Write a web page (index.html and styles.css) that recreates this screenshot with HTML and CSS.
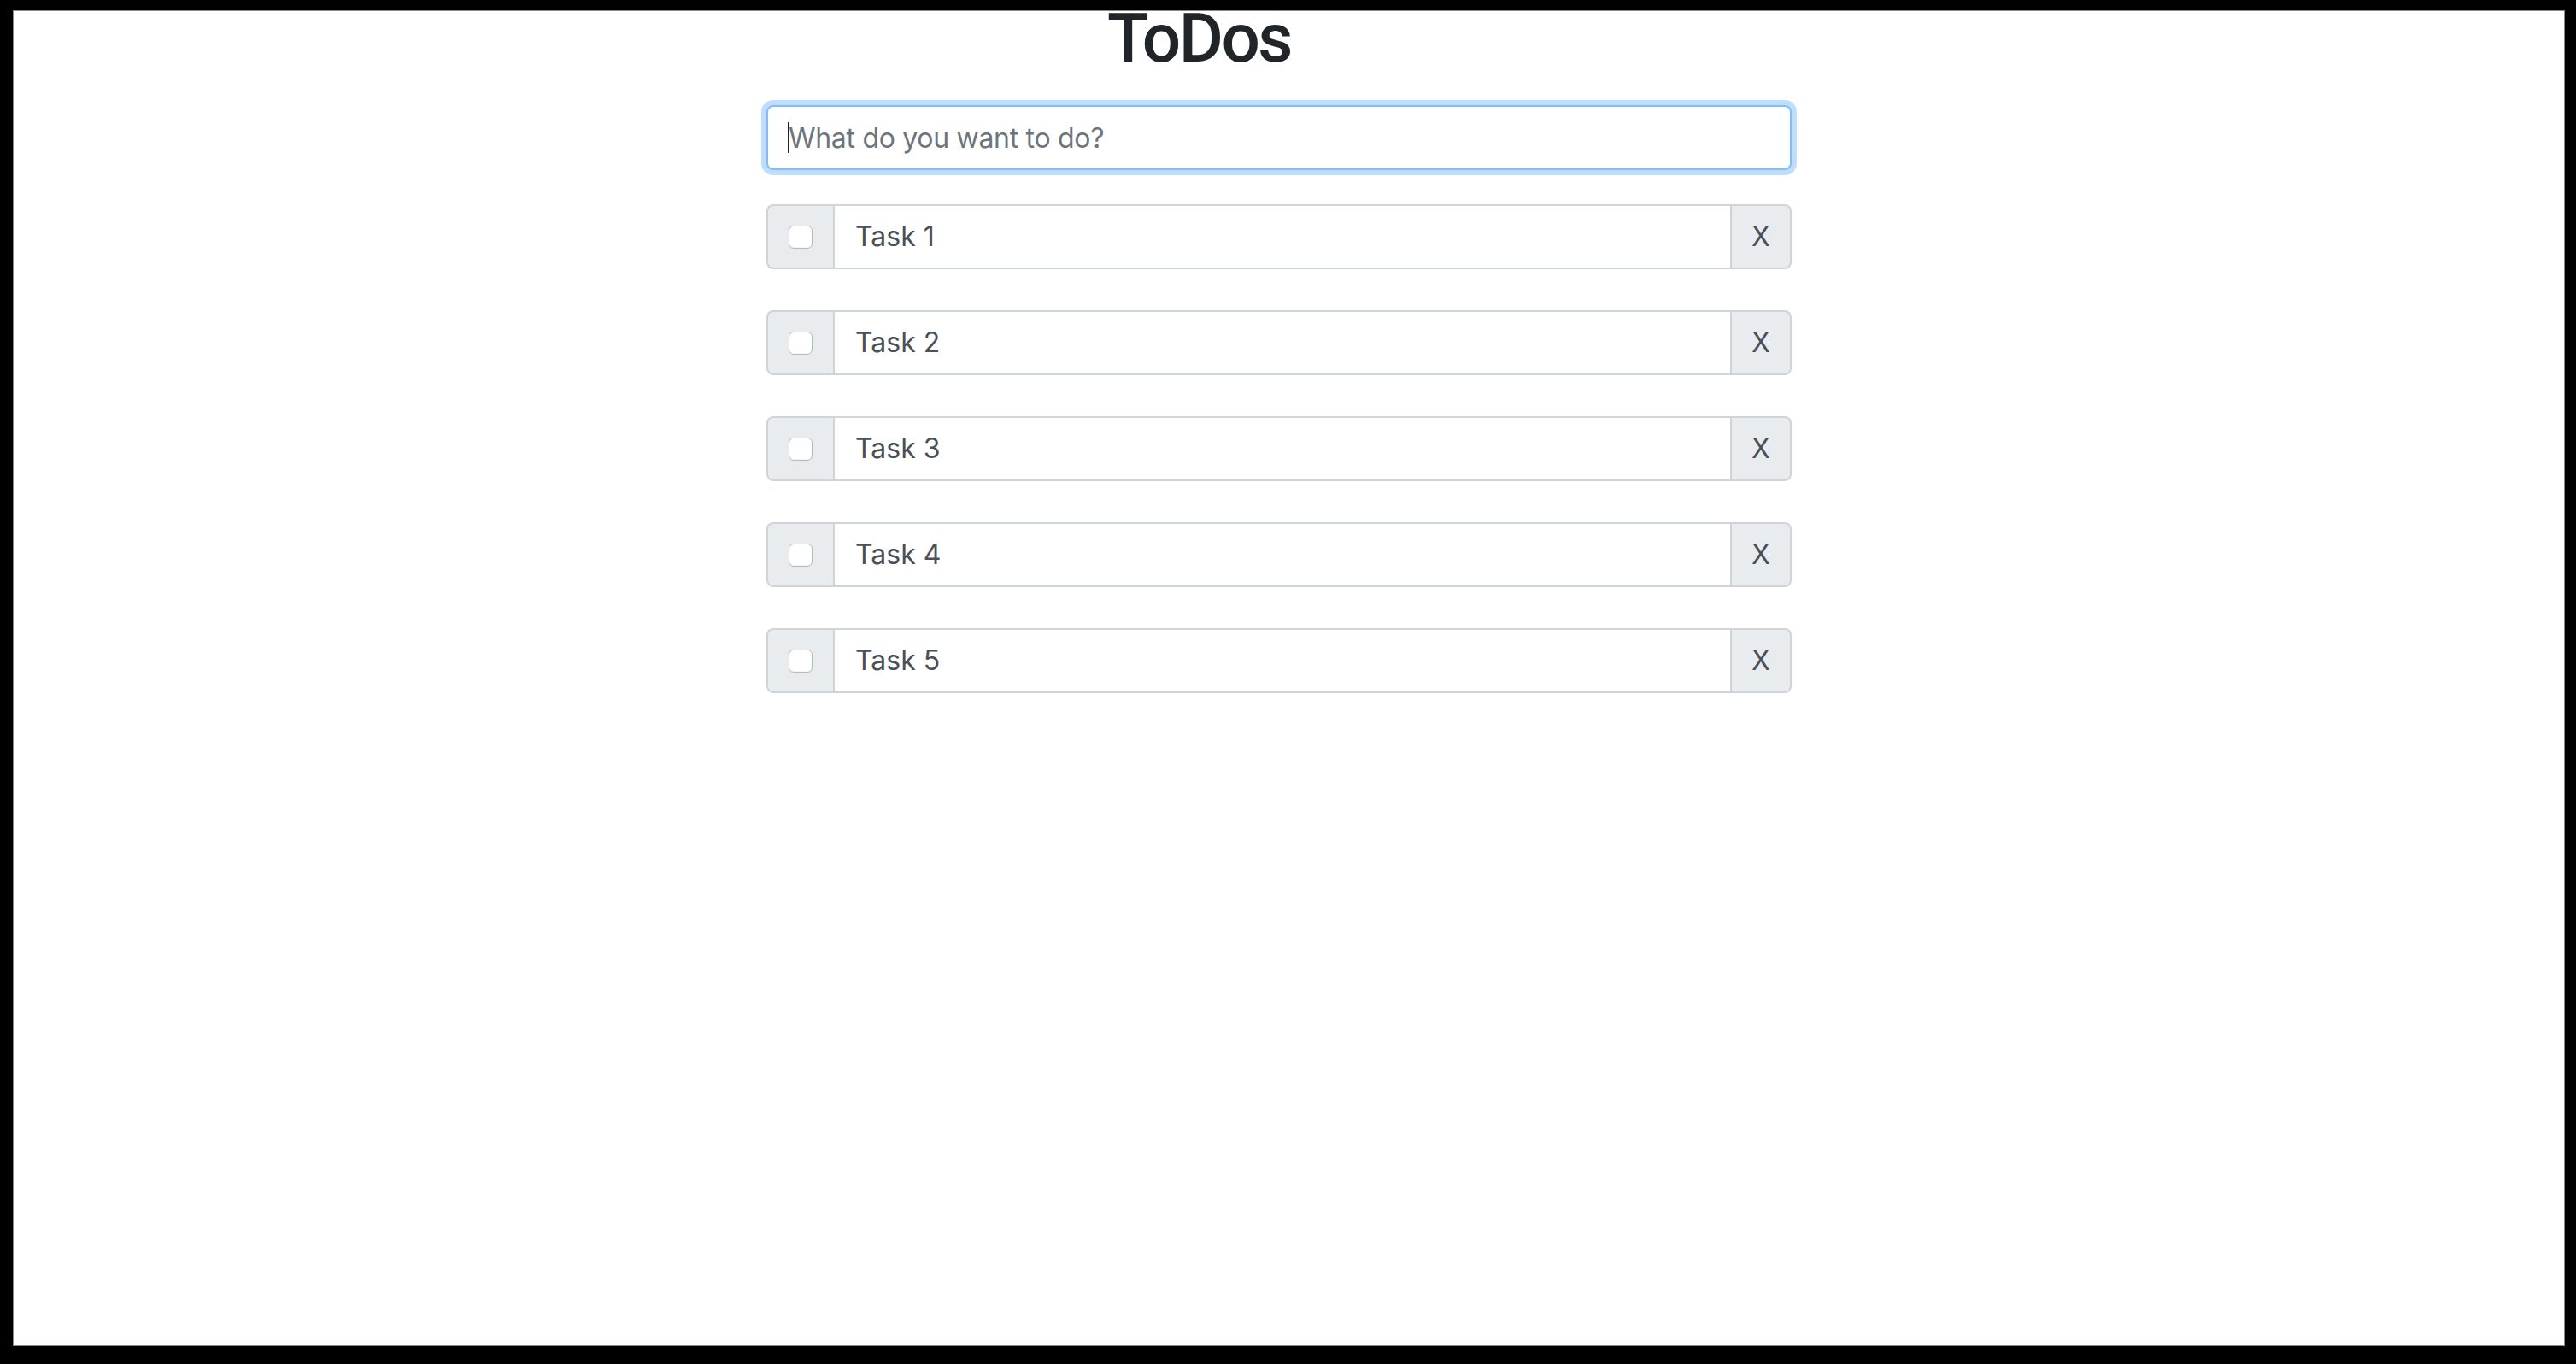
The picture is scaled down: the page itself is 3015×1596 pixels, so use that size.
FILE: index.html
```html
<!DOCTYPE html>
<html lang="en">
<head>
<meta charset="utf-8">
<title>ToDos</title>
<link rel="stylesheet" href="styles.css">
</head>
<body>
<div class="screen">
  <div class="app">
    <h1 class="title">ToDos</h1>
    <div class="new-todo">
      <input class="new-todo-input" type="text" placeholder="What do you want to do?">
      <span class="caret"></span>
    </div>
    <div class="todo-list">
      <div class="todo-row">
        <div class="check-cell"><span class="checkbox"></span></div>
        <div class="todo-text">Task 1</div>
        <div class="remove-btn">X</div>
      </div>
      <div class="todo-row">
        <div class="check-cell"><span class="checkbox"></span></div>
        <div class="todo-text">Task 2</div>
        <div class="remove-btn">X</div>
      </div>
      <div class="todo-row">
        <div class="check-cell"><span class="checkbox"></span></div>
        <div class="todo-text">Task 3</div>
        <div class="remove-btn">X</div>
      </div>
      <div class="todo-row">
        <div class="check-cell"><span class="checkbox"></span></div>
        <div class="todo-text">Task 4</div>
        <div class="remove-btn">X</div>
      </div>
      <div class="todo-row">
        <div class="check-cell"><span class="checkbox"></span></div>
        <div class="todo-text">Task 5</div>
        <div class="remove-btn">X</div>
      </div>
    </div>
  </div>
</div>
</body>
</html>
```
FILE: styles.css
```css
* { box-sizing: border-box; }

html, body {
  margin: 0;
  padding: 0;
  background: #000;
  overflow: hidden;
}

body {
  width: 3015px;
  height: 1596px;
  font-family: Inter, "Noto Sans", "Liberation Sans", sans-serif;
  color: #212529;
}

.screen {
  margin: 12px 13px 0 15px;
  height: 1563px;
  background: #fff;
  border: 1px solid #8a8a8a;
}

.app {
  width: 1200px;
  margin-left: 881px;
}

.title {
  margin: 2px 0 0 0;
  padding-left: 399px;
  font-family: Roboto, "Liberation Sans", sans-serif;
  font-weight: 500;
  font-size: 80px;
  line-height: 60px;
  letter-spacing: -2.5px;
  color: #212529;
}

.new-todo {
  position: relative;
  margin-top: 48px;
}

.new-todo-input {
  display: block;
  width: 1200px;
  height: 76px;
  margin: 0;
  padding: 12px 24px;
  font-family: Inter, "Noto Sans", "Liberation Sans", sans-serif;
  font-size: 32px;
  line-height: 48px;
  letter-spacing: -0.3px;
  color: #495057;
  background: #fff;
  border: 2px solid #80bdff;
  border-radius: 8px;
  outline: none;
  box-shadow: 0 0 0 6px rgba(0, 123, 255, 0.25);
}

.new-todo-input::placeholder {
  color: #6c757d;
  opacity: 1;
}

.caret {
  position: absolute;
  left: 25px;
  top: 20px;
  width: 2px;
  height: 36px;
  background: #212529;
}

.todo-list {
  display: flex;
  flex-direction: column;
  gap: 48px;
  margin-top: 40px;
}

.todo-row {
  display: flex;
  height: 76px;
  font-size: 32px;
  line-height: 48px;
  color: #495057;
}

.check-cell {
  display: flex;
  align-items: center;
  width: 78px;
  padding-left: 24px;
  background: #e9ecef;
  border: 2px solid #ced4da;
  border-right: none;
  border-radius: 8px 0 0 8px;
}

.checkbox {
  display: block;
  width: 28px;
  height: 27px;
  background: #fff;
  border: 1.5px solid #b9b9b9;
  border-radius: 6px;
  box-shadow: inset 0 -1px 1px rgba(0, 0, 0, 0.04);
}

.todo-text {
  flex: 1;
  padding: 12px 24px;
  background: #fff;
  border: 2px solid #ced4da;
}

.remove-btn {
  width: 70px;
  padding: 12px 0;
  text-align: center;
  background: #e9ecef;
  border: 2px solid #ced4da;
  border-left: none;
  border-radius: 0 8px 8px 0;
}
```
